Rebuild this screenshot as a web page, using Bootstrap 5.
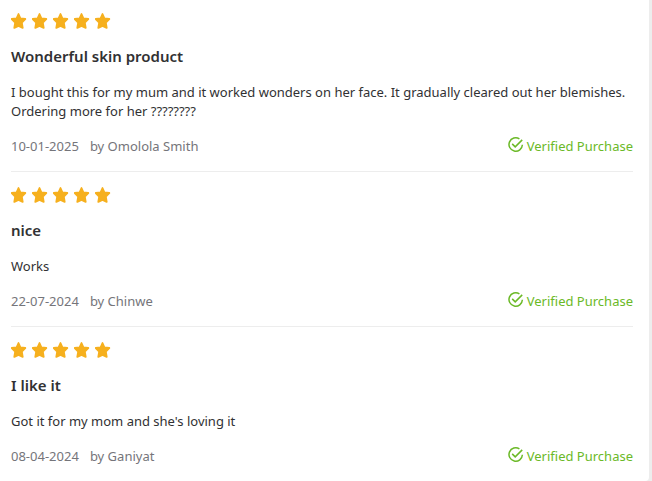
<!DOCTYPE html>
<html lang="en">
<head>
<meta charset="utf-8">
<meta name="viewport" content="width=device-width, initial-scale=1">
<title>Customer reviews</title>
<link href="https://cdn.jsdelivr.net/npm/bootstrap@5.3.0/dist/css/bootstrap.min.css" rel="stylesheet">
<style>
body { background: #ededed; color: #313133; font: 13px/19px "Noto Sans", sans-serif; }
.reviews { min-height: 100vh; margin-right: 3px; padding: 0 16px 0 11px; border-radius: 0 0 4px 0; }
.review { padding: 15px 0; border-bottom: 1px solid #ededed; }
.review:first-child { padding-top: 13px; }
.review:last-child { border-bottom: 0; }
.stars { gap: 5px; color: #f6b01e; }
.stars svg { overflow: visible; }
.review-title { font-size: 15px; line-height: 20px; margin: 17px 0; font-weight: 600; }
.review-text { margin: 0 0 16px; }
.meta { color: #75757a; }
.meta-by { gap: 11px; }
.verified { color: #6bb927; gap: 3px; }
</style>
<script src="https://cdn.jsdelivr.net/npm/bootstrap@5.3.0/dist/js/bootstrap.bundle.min.js"></script>
</head>
<body>
<svg class="d-none" aria-hidden="true">
  <symbol id="star" viewBox="0 0 16 16"><path fill="currentColor" stroke="currentColor" stroke-width="1.8" stroke-linejoin="round" d="M7.5 1 9.4 5.3 14.3 6 10.8 9.5 11.7 14.9 7.5 12.9 3.3 14.9 4.2 9.5 .7 6 5.6 5.3Z"/></symbol>
  <symbol id="check" viewBox="0 0 16 16"><path fill="none" stroke="currentColor" stroke-width="1.5" d="M11.4 1.9A6.7 6.7 0 1 0 14.4 7.8M4.2 6.9 7.2 9.9 14.2 2.9"/></symbol>
</svg>
<main class="reviews bg-white">
  <article class="review">
    <div class="stars d-flex" role="img" aria-label="5 out of 5">
      <svg width="16" height="16"><use href="#star"/></svg><svg width="16" height="16"><use href="#star"/></svg><svg width="16" height="16"><use href="#star"/></svg><svg width="16" height="16"><use href="#star"/></svg><svg width="16" height="16"><use href="#star"/></svg>
    </div>
    <h3 class="review-title">Wonderful skin product</h3>
    <p class="review-text">I bought this for my mum and it worked wonders on her face. It gradually cleared out her blemishes. Ordering more for her ????????</p>
    <div class="meta d-flex justify-content-between">
      <div class="meta-by d-flex"><span>10-01-2025</span><span>by Omolola Smith</span></div>
      <div class="verified d-flex"><svg width="16" height="16"><use href="#check"/></svg><span>Verified Purchase</span></div>
    </div>
  </article>
  <article class="review">
    <div class="stars d-flex" role="img" aria-label="5 out of 5">
      <svg width="16" height="16"><use href="#star"/></svg><svg width="16" height="16"><use href="#star"/></svg><svg width="16" height="16"><use href="#star"/></svg><svg width="16" height="16"><use href="#star"/></svg><svg width="16" height="16"><use href="#star"/></svg>
    </div>
    <h3 class="review-title">nice</h3>
    <p class="review-text">Works</p>
    <div class="meta d-flex justify-content-between">
      <div class="meta-by d-flex"><span>22-07-2024</span><span>by Chinwe</span></div>
      <div class="verified d-flex"><svg width="16" height="16"><use href="#check"/></svg><span>Verified Purchase</span></div>
    </div>
  </article>
  <article class="review">
    <div class="stars d-flex" role="img" aria-label="5 out of 5">
      <svg width="16" height="16"><use href="#star"/></svg><svg width="16" height="16"><use href="#star"/></svg><svg width="16" height="16"><use href="#star"/></svg><svg width="16" height="16"><use href="#star"/></svg><svg width="16" height="16"><use href="#star"/></svg>
    </div>
    <h3 class="review-title">I like it</h3>
    <p class="review-text">Got it for my mom and she's loving it</p>
    <div class="meta d-flex justify-content-between">
      <div class="meta-by d-flex"><span>08-04-2024</span><span>by Ganiyat</span></div>
      <div class="verified d-flex"><svg width="16" height="16"><use href="#check"/></svg><span>Verified Purchase</span></div>
    </div>
  </article>
</main>
</body>
</html>
